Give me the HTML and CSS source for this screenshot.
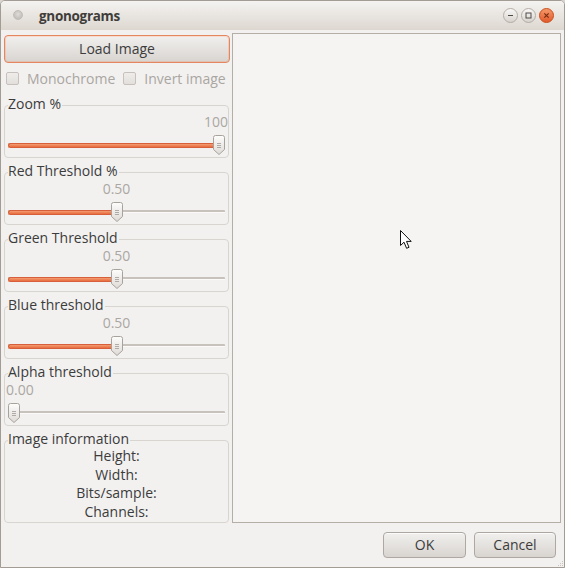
FILE: index.html
```html
<!DOCTYPE html>
<html>
<head>
<meta charset="utf-8">
<title>gnonograms</title>
<link rel="stylesheet" href="styles.css">
</head>
<body>
<div class="window">
  <header class="titlebar">
    <span class="menu-dot"></span>
    <span class="title">gnonograms</span>
    <div class="wm-buttons">
      <svg class="wm-btn" width="15" height="15" viewBox="0 0 15 15">
        <defs>
          <linearGradient id="gBtn" x1="0" y1="0" x2="0" y2="1">
            <stop offset="0" stop-color="#faf9f8"/>
            <stop offset="1" stop-color="#d6d1cc"/>
          </linearGradient>
          <linearGradient id="gClose" x1="0" y1="0" x2="0" y2="1">
            <stop offset="0" stop-color="#f59a6c"/>
            <stop offset="1" stop-color="#e0582a"/>
          </linearGradient>
        </defs>
        <circle cx="7.5" cy="7.5" r="7" fill="url(#gBtn)" stroke="#b3aca5"/>
        <line x1="5" y1="7.5" x2="10" y2="7.5" stroke="#4f4b47" stroke-width="1"/>
      </svg>
      <svg class="wm-btn" width="15" height="15" viewBox="0 0 15 15">
        <circle cx="7.5" cy="7.5" r="7" fill="url(#gBtn)" stroke="#b3aca5"/>
        <rect x="5" y="5" width="5" height="5" fill="none" stroke="#4f4b47" stroke-width="1"/>
      </svg>
      <svg class="wm-btn" width="15" height="15" viewBox="0 0 15 15">
        <circle cx="7.5" cy="7.5" r="7" fill="url(#gClose)" stroke="#c9511f"/>
        <path d="M5.3 5.3 L9.7 9.7 M9.7 5.3 L5.3 9.7" stroke="#7a2e10" stroke-width="1.2"/>
      </svg>
    </div>
  </header>

  <main class="main">
    <aside class="sidebar">
      <button class="btn btn-focus">Load Image</button>
      <div class="checks">
        <label class="check"><span class="box"></span>Monochrome</label>
        <label class="check"><span class="box"></span>Invert image</label>
      </div>

      <fieldset class="frame">
        <legend>Zoom %</legend>
        <div class="value val-end">100</div>
        <div class="slider">
          <div class="trough"><div class="fill" style="width:211px"></div></div>
          <svg class="handle" style="left:205px" width="12" height="20" viewBox="0 0 12 20"><use href="#handleShape"/></svg>
        </div>
      </fieldset>

      <fieldset class="frame">
        <legend>Red Threshold %</legend>
        <div class="value val-center">0.50</div>
        <div class="slider">
          <div class="trough"><div class="fill" style="width:108.5px"></div></div>
          <svg class="handle" style="left:102.5px" width="12" height="20" viewBox="0 0 12 20"><use href="#handleShape"/></svg>
        </div>
      </fieldset>

      <fieldset class="frame">
        <legend>Green Threshold</legend>
        <div class="value val-center">0.50</div>
        <div class="slider">
          <div class="trough"><div class="fill" style="width:108.5px"></div></div>
          <svg class="handle" style="left:102.5px" width="12" height="20" viewBox="0 0 12 20"><use href="#handleShape"/></svg>
        </div>
      </fieldset>

      <fieldset class="frame">
        <legend>Blue threshold</legend>
        <div class="value val-center">0.50</div>
        <div class="slider">
          <div class="trough"><div class="fill" style="width:108.5px"></div></div>
          <svg class="handle" style="left:102.5px" width="12" height="20" viewBox="0 0 12 20"><use href="#handleShape"/></svg>
        </div>
      </fieldset>

      <fieldset class="frame">
        <legend>Alpha threshold</legend>
        <div class="value val-start">0.00</div>
        <div class="slider">
          <div class="trough"><div class="fill" style="width:0px"></div></div>
          <svg class="handle" style="left:0px" width="12" height="20" viewBox="0 0 12 20"><use href="#handleShape"/></svg>
        </div>
      </fieldset>

      <fieldset class="frame frame-info">
        <legend>Image information</legend>
        <div class="info">
          <div>Height:</div>
          <div>Width:</div>
          <div>Bits/sample:</div>
          <div>Channels:</div>
        </div>
      </fieldset>
    </aside>

    <section class="canvas">
      <svg class="cursor" width="13" height="20" viewBox="0 0 13 20">
        <path d="M0.5 0.5 L0.5 15.5 L4 12.2 L6.6 18.3 L9 17.3 L6.5 11.4 L11.2 11.4 Z" fill="#ffffff" stroke="#111111" stroke-width="1" stroke-linejoin="miter"/>
      </svg>
    </section>
  </main>

  <footer class="actions">
    <button class="btn btn-ok">OK</button>
    <button class="btn btn-cancel">Cancel</button>
  </footer>

  <svg class="grip" width="7" height="7" viewBox="0 0 7 7">
    <g fill="#c9c4be">
      <rect x="5" y="1" width="1" height="1"/>
      <rect x="3" y="3" width="1" height="1"/><rect x="5" y="3" width="1" height="1"/>
      <rect x="1" y="5" width="1" height="1"/><rect x="3" y="5" width="1" height="1"/><rect x="5" y="5" width="1" height="1"/>
    </g>
  </svg>

  <svg class="defs" width="0" height="0">
    <defs>
      <linearGradient id="gHandle" x1="0" y1="0" x2="0" y2="1">
        <stop offset="0" stop-color="#fdfdfc"/>
        <stop offset="1" stop-color="#dedad6"/>
      </linearGradient>
      <g id="handleShape">
        <path d="M2.5 0.5 H9.5 Q11.5 0.5 11.5 2.5 V14.5 L6 19.5 L0.5 14.5 V2.5 Q0.5 0.5 2.5 0.5 Z" fill="url(#gHandle)" stroke="#a8a29c" stroke-width="1"/>
        <path d="M4 8.5 H8 M4 10.5 H8 M4 12.5 H8" stroke="#a19b95" stroke-width="0.8"/>
      </g>
    </defs>
  </svg>
</div>
</body>
</html>
```

FILE: styles.css
```css
* {
  box-sizing: border-box;
}

html,
body {
  margin: 0;
  padding: 0;
}

body {
  width: 565px;
  height: 568px;
  background: #d9d5d0;
  overflow: hidden;
}

.window {
  position: relative;
  width: 565px;
  height: 568px;
  display: flex;
  flex-direction: column;
  border: 1px solid #a39c95;
  border-radius: 5px 5px 0 0;
  background: #f2f1f0;
  font-family: "Open Sans", "Noto Sans", sans-serif;
  font-size: 14px;
  color: #3c3c3c;
  overflow: hidden;
}

/* ---------- title bar ---------- */
.titlebar {
  flex: none;
  height: 29px;
  display: flex;
  align-items: center;
  padding: 0 10px 0 12px;
  background: linear-gradient(#f4f3f1, #ddd7d0);
}

.menu-dot {
  width: 10px;
  height: 10px;
  border-radius: 50%;
  background: radial-gradient(circle at 50% 40%, #dedbd8 0%, #b9b4af 100%);
  border: 1px solid #c2bdb8;
  margin-top: -1px;
}

.title {
  margin-left: 16px;
  font-weight: 700;
  font-size: 13.5px;
  letter-spacing: -0.3px;
  color: #3f3d3a;
  margin-top: 1px;
}

.wm-buttons {
  margin-left: auto;
  display: flex;
  gap: 3px;
}

.wm-btn {
  display: block;
}

/* ---------- main ---------- */
.main {
  flex: 1;
  min-height: 0;
  display: flex;
  gap: 2px;
  padding: 3px 3px 0 3px;
}

.sidebar {
  flex: none;
  width: 226px;
  display: flex;
  flex-direction: column;
  padding: 2px 0 0;
}

.canvas {
  flex: 1;
  position: relative;
  border: 1px solid #b5aea7;
  background: #f5f4f2;
}

.cursor {
  position: absolute;
  left: 167px;
  top: 196px;
}

/* ---------- buttons ---------- */
.btn {
  font-family: "Open Sans", "Noto Sans", sans-serif;
  font-size: 14px;
  color: #3c3c3c;
  border: 1px solid #aea8a2;
  border-radius: 4px;
  background: linear-gradient(#f1f0ee, #d8d4d0);
  box-shadow: inset 0 1px 0 rgba(255, 255, 255, 0.7);
  padding: 0;
  line-height: 1;
}

.btn-focus {
  flex: none;
  height: 28px;
  width: 226px;
  border-color: #e48660;
  box-shadow: inset 0 0 0 1px rgba(240, 160, 125, 0.35), inset 0 1px 0 rgba(255, 255, 255, 0.7);
}

.btn-ok {
  width: 83px;
  height: 26px;
}

.btn-cancel {
  width: 82px;
  height: 26px;
}

/* ---------- check boxes ---------- */
.checks {
  flex: none;
  display: flex;
  align-items: center;
  gap: 8px;
  height: 18px;
  margin: 6px 0 4px;
  padding-left: 2px;
}

.check {
  display: flex;
  align-items: center;
  gap: 8px;
  color: #aaa6a1;
  line-height: 17px;
}

.box {
  width: 13px;
  height: 13px;
  border: 1px solid #c6c1bc;
  border-radius: 2px;
  background: linear-gradient(#efedeb, #e2dfdb);
}

/* ---------- frames ---------- */
.frame {
  flex: none;
  margin: 4px 0 0;
  padding: 0 3px;
  border: 1px solid #d8d4cf;
  border-radius: 4px;
  min-width: 0;
  width: 225px;
}

.frame legend {
  padding: 0 1px 3px 0;
  margin: 0;
  line-height: 17px;
  font-size: 14px;
  color: #3c3c3c;
}

.value {
  height: 14px;
  line-height: 14px;
  color: #aba7a2;
}

.val-end {
  text-align: right;
  margin-right: -3px;
}

.val-center {
  text-align: center;
}

.val-start {
  text-align: left;
  margin-left: -2px;
}

.slider {
  position: relative;
  height: 28px;
}

.trough {
  position: absolute;
  left: 0;
  right: 0;
  top: 14px;
  height: 3px;
  border-top: 2px solid #c7c2bc;
  border-bottom: 1px solid #fbfaf9;
  border-radius: 1px;
}

.fill {
  position: absolute;
  left: 0;
  top: -2px;
  height: 5px;
  border-radius: 3px 0 0 3px;
  background: linear-gradient(#f39d74, #e86b3b);
  border: 1px solid #d7603a;
  border-right: none;
}

.handle {
  position: absolute;
  top: 6px;
}

.frame-info {
  flex: 1 0 auto;
}

.info {
  margin-top: -3px;
  text-align: center;
  line-height: 18.7px;
}

/* ---------- action area ---------- */
.actions {
  flex: none;
  display: flex;
  justify-content: flex-end;
  gap: 8px;
  padding: 9px 8px 9px;
}

.grip {
  position: absolute;
  right: 0;
  bottom: 0;
}

.defs {
  position: absolute;
  width: 0;
  height: 0;
}
```
